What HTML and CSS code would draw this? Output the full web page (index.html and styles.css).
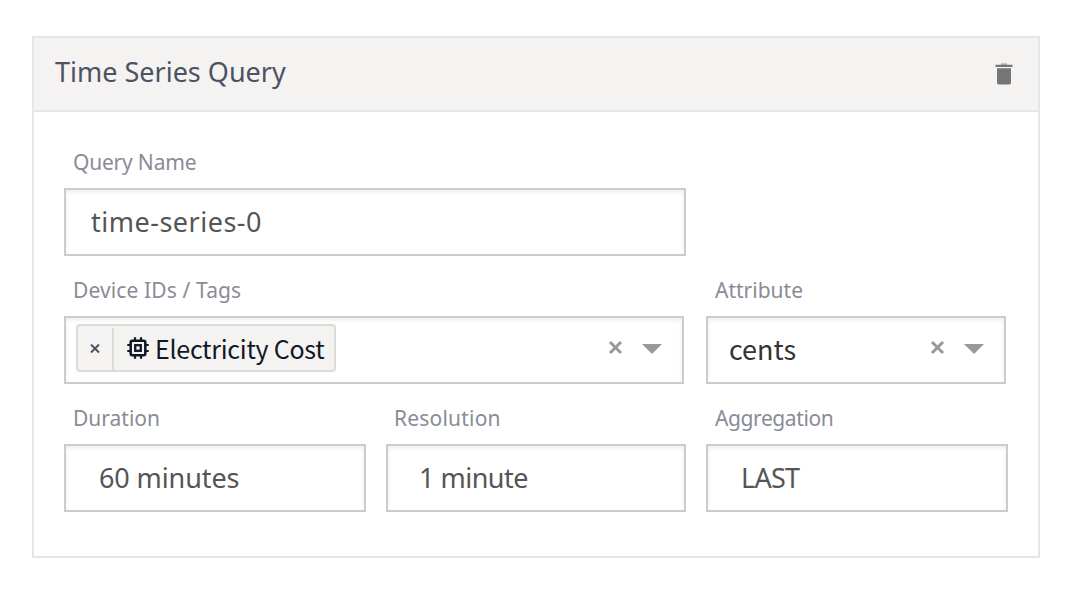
FILE: index.html
```html
<!DOCTYPE html>
<html lang="en">
<head>
<meta charset="utf-8">
<title>Time Series Query</title>
<link rel="stylesheet" href="styles.css">
</head>
<body>
<section class="card">
  <header class="card-header">
    <h2 class="title">Time Series Query</h2>
    <svg class="trash" viewBox="0 0 18 23"><path fill="#b4b4b3" d="M6 .3h6v2H6z"/><path fill="#757575" d="M.5 1.700h17v2.300H.5zM2 5.200h14v14.500q0 1.800-1.800 1.800H3.800Q2 21.500 2 19.700z"/></svg>
  </header>
  <div class="form">
    <div class="field name-field">
      <div class="label"><span class="t-name">Query Name</span></div>
      <div class="box input"><span class="t-series">time-series-0</span></div>
    </div>
    <div class="field wide select-field">
      <div class="label"><span class="t-device">Device IDs / Tags</span></div>
      <div class="box select multi">
        <div class="tag">
          <div class="tag-remove"><svg width="10" height="10" viewBox="0 0 10 10"><path d="M1 .5l8 8M9 .5l-8 8" stroke="#4a4f60" stroke-width="1.900"/></svg></div>
          <div class="tag-value">
            <svg class="chip" viewBox="0 0 22 22"><g fill="none" stroke="#101828"><rect x="3.700" y="3.700" width="14.600" height="14.600" rx="1.500" stroke-width="2.500"/><rect x="8.200" y="8.200" width="5.600" height="5.600" stroke-width="2.300"/><path stroke-width="2.200" d="M8 .3v3M14 .3v3M8 18.700v3M14 18.700v3M.3 8h3M.3 14h3M18.700 8h3M18.700 14h3"/></g></svg>
            <span class="t-cost">Electricity Cost</span>
          </div>
        </div>
        <svg class="controls" viewBox="0 0 54 14"><path d="M2 1l11 11M13 1L2 12" stroke="#999" stroke-width="2.900"/><path d="M34 3h20l-10 10z" fill="#999"/></svg>
      </div>
    </div>
    <div class="field select-field">
      <div class="label"><span class="t-attr">Attribute</span></div>
      <div class="box select single">
        <span class="t-cents">cents</span>
        <svg class="controls" viewBox="0 0 54 14"><path d="M2 1l11 11M13 1L2 12" stroke="#999" stroke-width="2.900"/><path d="M34 3h20l-10 10z" fill="#999"/></svg>
      </div>
    </div>
    <div class="field">
      <div class="label"><span class="t-dur">Duration</span></div>
      <div class="box dropdown"><span class="t-60">60 minutes</span></div>
    </div>
    <div class="field">
      <div class="label"><span class="t-res">Resolution</span></div>
      <div class="box dropdown"><span class="t-1">1 minute</span></div>
    </div>
    <div class="field">
      <div class="label"><span class="t-agg">Aggregation</span></div>
      <div class="box dropdown"><span class="t-last">LAST</span></div>
    </div>
  </div>
</section>
</body>
</html>
```
FILE: styles.css
```css
* { box-sizing: border-box; }
body { margin: 0; padding: 36px 32px; background: #fff; font-family: "Noto Sans", sans-serif; }
.card { height: 522px; border: 2px solid #e5e6e8; background: #fff; }
.card-header { height: 74px; padding: 0 25px 0 21px; display: flex; align-items: center; justify-content: space-between; background: #f4f3f2; border-bottom: 2px solid #e5e6e8; }
.title { margin: 0 0 4px; font-size: 27px; font-weight: 400; line-height: 36px; color: #4d5262; white-space: nowrap; }
.trash { width: 18px; height: 23px; }
.form { padding: 36px 30px 0; display: grid; grid-template-columns: 302px 300px 302px; gap: 20px; }
.field { height: 108px; display: flex; flex-direction: column; }
.wide { grid-column: span 2; }
.name-field { grid-column: 1 / 4; width: 622px; }
.select-field { padding-right: 2px; }
.label { flex: none; height: 40px; padding-left: 9px; font-size: 21px; line-height: 30px; color: #898c97; white-space: nowrap; }
.label span { display: block; margin-top: -1px; }
.box { flex: none; height: 68px; display: flex; align-items: center; border: 2px solid #ccc; background: #fff; box-shadow: inset 0 2px 4px rgba(0,0,0,.08); font-size: 27px; line-height: 36px; color: #555; white-space: nowrap; }
.input { padding-left: 25px; }
.dropdown { padding-left: 33px; }
.select { padding-right: 20px; justify-content: space-between; color: #333; }
.multi { padding-left: 10px; }
.single { padding-left: 21px; }
.tag { width: 260px; height: 48px; margin-bottom: 4px; display: flex; align-items: center; border: 2px solid #dadad6; border-radius: 4px; background: #f4f3f2; color: #101828; font-size: 25px; }
.tag-remove { width: 36px; height: 42px; margin-top: 2px; display: flex; align-items: center; justify-content: center; border-right: 2px solid #dadad6; }
.tag-value { padding-left: 13px; display: flex; align-items: center; gap: 6px; }
.chip { width: 22px; height: 22px; flex: none; }
.controls { width: 54px; height: 14px; flex: none; margin-bottom: 4px; }

.t-name { letter-spacing: -.2px; }
.t-series { letter-spacing: .5px; }
.t-device { letter-spacing: .12px; }
.t-res { letter-spacing: .2px; margin-left: -1px; }
.t-agg { letter-spacing: -.4px; }
.t-60 { letter-spacing: -.1px; }
.t-1 { letter-spacing: -.5px; margin-left: -2px; }
.t-last { letter-spacing: -.7px; }
.t-cost { font-family: "Noto Sans CJK SC", sans-serif; letter-spacing: -.26px; }
.t-cents { margin-bottom: 2px; font-family: "Noto Sans CJK SC", sans-serif; }
```
